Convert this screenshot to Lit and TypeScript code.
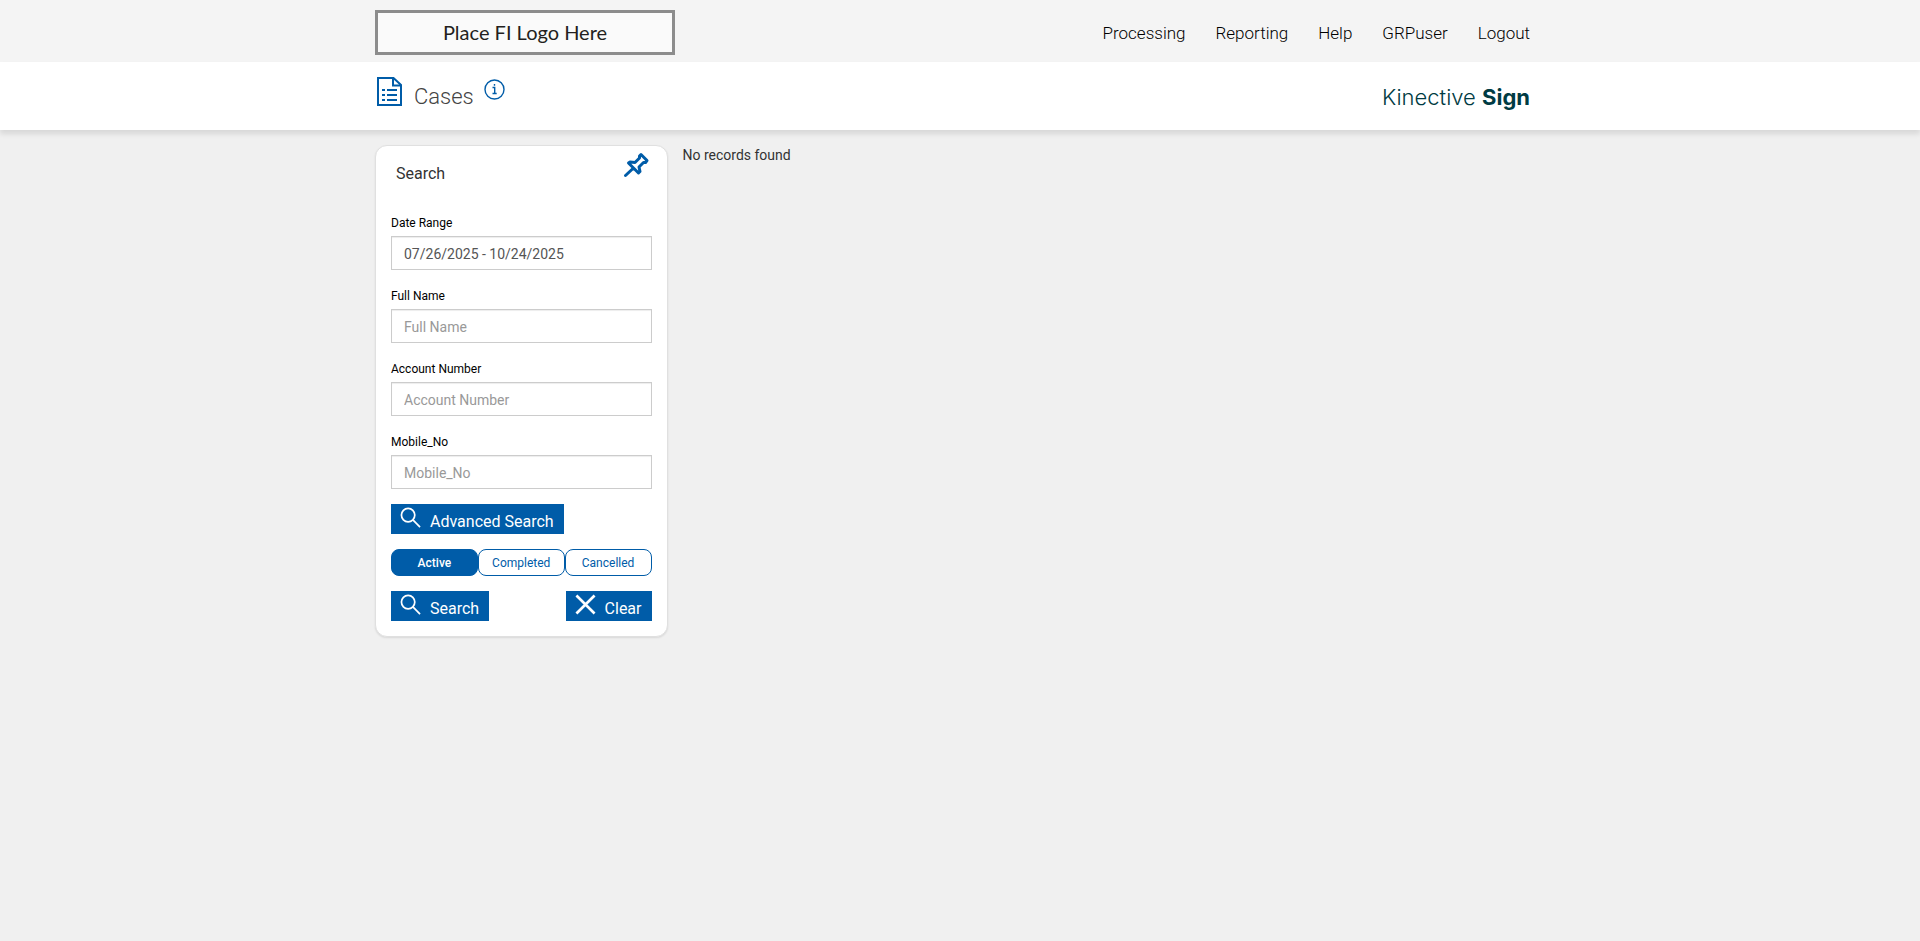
import { LitElement, html, css, svg } from "lit";
import { customElement, state } from "lit/decorators.js";

const searchIcon = html`<svg class="icon" viewBox="0 0 22 22" aria-hidden="true">
  <circle cx="8.5" cy="8.5" r="7" /><path d="M13.5 13.5L21 21" />
</svg>`;

const closeIcon = html`<svg class="icon close" viewBox="0 0 22 22" aria-hidden="true">
  <path d="M1.5 1.5L20.5 20.5M20.5 1.5L1.5 20.5" />
</svg>`;

const bullets = [13, 18, 23].map(
  (y) => svg`<path d="M5 ${y}h3M10 ${y}h10" />`
);

@customElement("app-root")
export class AppRoot extends LitElement {
  static styles = css`
    :host {
      display: block;
      min-height: 100vh;
      background: #f0f0f0;
      color: #333;
      font-family: Roboto, "Liberation Sans", sans-serif;
      font-size: 14px;
      line-height: 20px;
    }
    * { box-sizing: border-box; }
    button, input { font-family: inherit; margin: 0; }
    svg { fill: none; display: block; flex: none; }
    .container {
      max-width: 1170px;
      margin: 0 auto;
      display: flex;
    }
    .bar { justify-content: space-between; align-items: center; padding-right: 15px; }
    .top { background: #f4f4f4; padding: 10px 0 7px; }
    .logo {
      width: 300px;
      height: 45px;
      border: 3px solid #8c8c8c;
      background: #fafafa;
      color: #231f20;
      font: 20px/38px Lato, sans-serif;
      text-align: center;
    }
    nav { display: flex; gap: 30px; }
    nav a {
      color: #000;
      text-decoration: none;
      font-size: 17px;
      font-weight: 300;
      line-height: 24px;
    }
    .heading {
      background: #fff;
      box-shadow: 0 4px 5px rgba(0, 0, 0, 0.1);
    }
    .heading .bar { min-height: 68px; }
    .title { display: flex; align-items: center; }
    .title .doc { width: 25px; height: 29px; margin: 0 12px 10px 2px; stroke: #005ca8; stroke-width: 2; }
    h1 { margin: 2px 0 0; font-size: 22px; line-height: 28px; font-weight: 300; color: #444; }
    .info {
      border: 0;
      padding: 0;
      background: none;
      margin: 0 0 14px 10px;
      cursor: pointer;
    }
    .info svg { width: 21px; height: 21px; stroke: #005ca8; stroke-width: 1.4; }
    .brand { font: 300 22px/28px Inter, sans-serif; color: #003b43; padding-top: 2px; }
    .brand b { font-weight: 700; }
    .content { padding-top: 15px; gap: 15px; align-items: flex-start; }
    .card {
      flex: 0 0 25%;
      background: #fff;
      border: 1px solid #e0e0e0;
      border-radius: 12px;
      box-shadow: 0 1px 2px rgba(0, 0, 0, 0.1);
      padding: 0 15px 15px;
    }
    .card header { display: flex; justify-content: space-between; padding: 6px 3px 0 5px; height: 66px; }
    h2 { margin: 12px 0 0; font-size: 16px; line-height: 20px; font-weight: 400; color: #333; }
    .pin { border: 0; padding: 0; background: none; height: 26px; cursor: pointer; }
    .pin svg { width: 26px; height: 26px; stroke: #005ca8; stroke-width: 3; stroke-linejoin: round; stroke-linecap: round; }
    .field { margin-bottom: 15px; }
    .field label { display: block; font-size: 12px; line-height: 20px; color: #000; padding-top: 1px; margin-bottom: 3px; }
    .field input {
      display: block;
      width: 100%;
      height: 34px;
      padding: 7px 12px 5px;
      border: 1px solid #ccc;
      border-radius: 0;
      background: #fff;
      box-shadow: inset 0 1px 1px rgba(0, 0, 0, 0.075);
      font-size: 14px;
      line-height: 20px;
      color: #555;
    }
    .field input::placeholder { color: #999; opacity: 1; }
    .btn {
      display: flex;
      align-items: flex-start;
      gap: 9px;
      height: 30px;
      border: 0;
      padding: 3px 10px 0 9px;
      background: #005ca8;
      color: #fff;
      font-size: 16px;
      line-height: 30px;
      cursor: pointer;
    }
    .icon { width: 21px; height: 21px; stroke: #fff; stroke-width: 1.8; }
    .close { stroke-width: 2.8; }
    .tabs { display: grid; grid-template-columns: repeat(3, 1fr); margin: 15px 0; }
    .tab {
      height: 27px;
      padding: 2px 0 0;
      border: 1px solid #005ca8;
      border-radius: 8px;
      background: #fff;
      color: #005ca8;
      font-size: 12px;
      line-height: 23px;
      cursor: pointer;
    }
    .tab.on { background: #005ca8; color: #fff; font-weight: 500; }
    .actions { display: flex; justify-content: space-between; }
    .empty { margin: 0; }
  `;

  @state() private status = "Active";

  private field(id: string, label: string, value = "") {
    return html`<div class="field">
      <label for=${id}>${label}</label>
      <input id=${id} type="text" placeholder=${label} .value=${value} />
    </div>`;
  }

  render() {
    return html`
      <div class="top">
        <div class="container bar">
          <div class="logo">Place FI Logo Here</div>
          <nav>
            ${["Processing", "Reporting", "Help", "GRPuser", "Logout"].map(
              (item) => html`<a href="#">${item}</a>`
            )}
          </nav>
        </div>
      </div>
      <div class="heading">
        <div class="container bar">
          <div class="title">
            <svg class="doc" viewBox="0 0 25 29" aria-hidden="true">
              <path d="M1 1H16.500L24 8V28H1Z" /><path d="M16 1V8.500H24" />${bullets}
            </svg>
            <h1>Cases</h1>
            <button class="info" aria-label="Information">
              <svg viewBox="0 0 21 21">
                <circle cx="10.5" cy="10.5" r="9.5" />
                <path d="M8.500 8.500H10.700V14.500M8.500 14.500H12.700M10.500 5V6.800" />
              </svg>
            </button>
          </div>
          <div class="brand">Kinective <b>Sign</b></div>
        </div>
      </div>
      <main class="container content">
        <section class="card">
          <header>
            <h2>Search</h2>
            <button class="pin" aria-label="Pin search">
              <svg viewBox="0 0 26 26">
                <path d="M2.500 23.500L10 16.500M18 2.500L24 8.500L22.500 10.500H20.500L16 15L17 19.500L15.500 21L5.500 11L7 10L12 10.500L16.500 6V4Z" />
              </svg>
            </button>
          </header>
          ${this.field("date", "Date Range", "07/26/2025 - 10/24/2025")}
          ${this.field("name", "Full Name")}
          ${this.field("account", "Account Number")}
          ${this.field("mobile", "Mobile_No")}
          <button class="btn">${searchIcon}<span>Advanced Search</span></button>
          <div class="tabs">
            ${["Active", "Completed", "Cancelled"].map(
              (name) => html`<button
                class="tab ${this.status === name ? "on" : ""}"
                aria-pressed=${this.status === name}
                @click=${() => (this.status = name)}
              >${name}</button>`
            )}
          </div>
          <div class="actions">
            <button class="btn">${searchIcon}<span>Search</span></button>
            <button class="btn">${closeIcon}<span>Clear</span></button>
          </div>
        </section>
        <p class="empty">No records found</p>
      </main>
    `;
  }
}
